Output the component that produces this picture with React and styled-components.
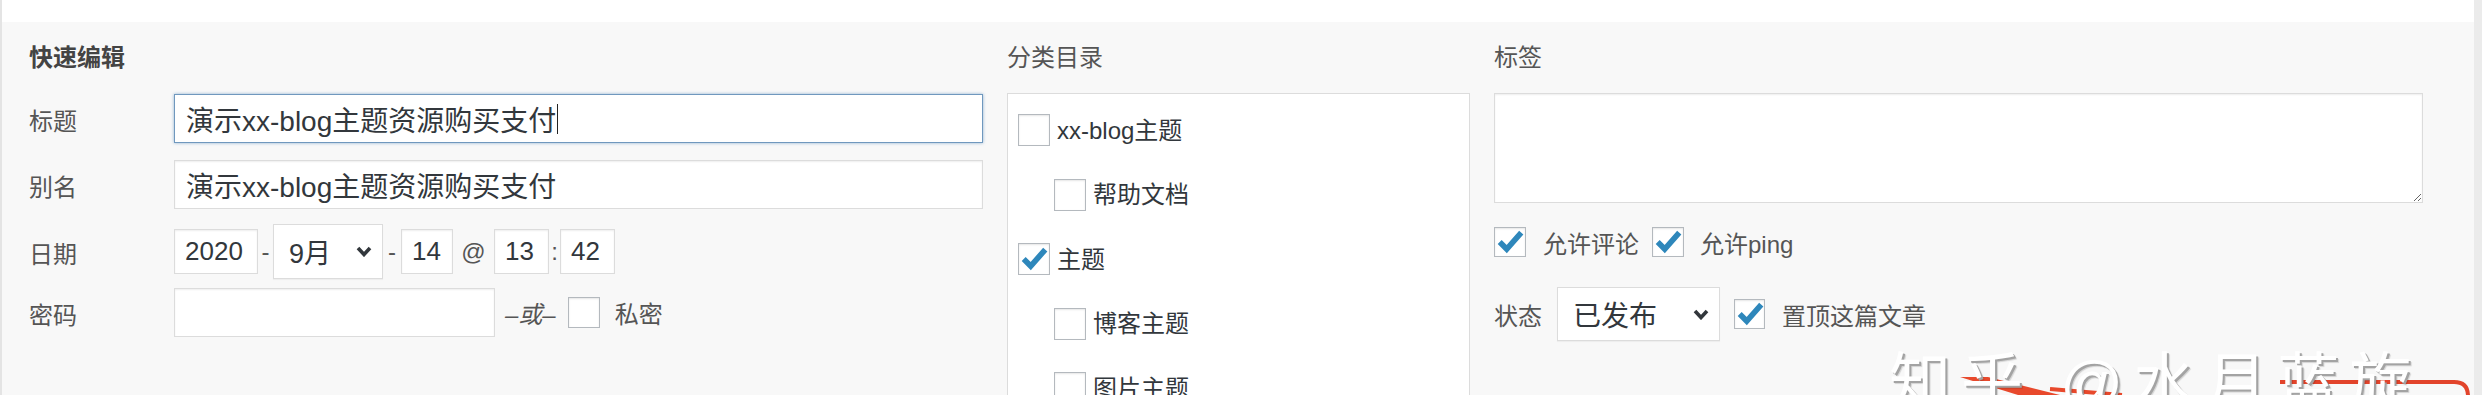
import React from "react";
import styled, { createGlobalStyle } from "styled-components";

const Global = createGlobalStyle`
  html, body { margin: 0; padding: 0; background: #fff; }
  body { font-family: "Liberation Sans", "Noto Sans CJK SC", sans-serif; }
  * { box-sizing: border-box; }
`;

const Page = styled.div`
  position: relative;
  display: flex;
  width: 2482px;
  height: 395px;
  overflow: hidden;
`;

const Main = styled.div`
  flex: 1;
  min-width: 0;
  display: flex;
  flex-direction: column;
  border-left: 2px solid #e4e4e4;
`;

const Scrollbar = styled.div`
  width: 8px;
  flex: none;
  background: #ebebeb;
`;

const TopStrip = styled.div`
  height: 22px;
  flex: none;
  background: #fff;
`;

const Panel = styled.div`
  flex: 1;
  background: #f8f8f8;
  display: grid;
  grid-template-columns: 954px 463px 929px;
  column-gap: 24px;
  align-items: start;
  padding: 19px 0 0 27px;
  overflow: hidden;
`;

const Column = styled.div`
  display: flex;
  flex-direction: column;
  min-width: 0;
`;

const Heading = styled.div`
  height: 34px;
  line-height: 34px;
  margin-bottom: 18px;
  font-size: 24px;
  color: ${(p) => (p.$strong ? "#444" : "#555")};
  font-weight: ${(p) => (p.$strong ? 700 : 400)};
`;

const FieldRow = styled.div`
  display: flex;
  align-items: center;
  height: ${(p) => p.$h}px;
  margin-top: ${(p) => p.$mt}px;
`;

const FieldLabel = styled.span`
  width: 145px;
  flex: none;
  padding-top: 2px;
  font-size: 24px;
  color: #555;
`;

const TextField = styled.div`
  flex: ${(p) => (p.$w ? "none" : "1")};
  width: ${(p) => (p.$w ? `${p.$w}px` : "auto")};
  height: ${(p) => p.$h || 49}px;
  display: flex;
  align-items: center;
  padding: 0 ${(p) => p.$pad || 11}px;
  background: #fff;
  border: 1px solid ${(p) => (p.$focus ? "#7098be" : "#dcdcdc")};
  box-shadow: ${(p) =>
    p.$focus
      ? "0 0 3px rgba(60, 120, 180, 0.55)"
      : "inset 0 1px 2px rgba(0, 0, 0, 0.07)"};
  font-size: ${(p) => p.$fs || 28}px;
  color: #32373c;
  white-space: nowrap;
  overflow: hidden;
`;

const Caret = styled.span`
  display: inline-block;
  width: 1px;
  height: 30px;
  margin-left: 1px;
  background: #222;
`;

const SelectBox = styled.div`
  flex: none;
  width: ${(p) => p.$w}px;
  height: ${(p) => p.$h}px;
  margin-left: ${(p) => p.$ml || 0}px;
  display: flex;
  align-items: center;
  justify-content: space-between;
  padding: 0 10px 0 15px;
  background: #fff;
  border: 1px solid #dcdcdc;
  box-shadow: 0 1px 1px rgba(0, 0, 0, 0.04);
  font-size: ${(p) => p.$fs}px;
  color: #32373c;
  white-space: nowrap;
`;

const Sep = styled.span`
  flex: none;
  width: ${(p) => p.$w}px;
  text-align: center;
  font-size: 24px;
  color: #555;
`;

const OrText = styled.span`
  margin-left: 10px;
  font-size: 24px;
  font-style: italic;
  color: #555;
`;

const Box = styled.span`
  flex: none;
  width: ${(p) => p.$w || 32}px;
  height: ${(p) => p.$h || 32}px;
  margin-left: ${(p) => p.$ml || 0}px;
  display: inline-flex;
  align-items: center;
  justify-content: center;
  background: #fff;
  border: 1px solid #b4b9be;
  box-shadow: inset 0 1px 2px rgba(0, 0, 0, 0.1);
  overflow: visible;
`;

const InlineText = styled.span`
  margin-left: ${(p) => p.$ml || 0}px;
  font-size: 24px;
  color: #555;
  white-space: nowrap;
`;

const CatBox = styled.div`
  height: 330px;
  background: #fff;
  border: 1px solid #dcdcdc;
  padding: 4px 10px 0 10px;
`;

const CatItem = styled.div`
  display: flex;
  align-items: center;
  gap: 7px;
  height: 64.5px;
  padding-left: ${(p) => p.$level * 36}px;
  font-size: 24px;
  color: #32373c;
  white-space: nowrap;
`;

const CatName = styled.span`
  margin-bottom: 4px;
`;

const TagArea = styled.textarea`
  display: block;
  width: 100%;
  height: 110px;
  margin: 0;
  background: #fff;
  border: 1px solid #dcdcdc;
  box-shadow: inset 0 1px 2px rgba(0, 0, 0, 0.07);
  resize: vertical;
  font-family: inherit;
  outline: none;
`;

const OptionRow = styled.div`
  display: flex;
  align-items: center;
  height: ${(p) => p.$h}px;
  margin-top: ${(p) => p.$mt}px;
`;

const Watermark = styled.div`
  position: absolute;
  left: 1889px;
  top: 352px;
  font-size: 62px;
  line-height: 1;
  letter-spacing: 10px;
  color: #fff;
  text-shadow: 2px 2px 0 #a3a3a3, 3px 3px 1px rgba(0, 0, 0, 0.15);
  white-space: nowrap;
  pointer-events: none;
`;

const Scribble = styled.svg`
  position: absolute;
  left: 1900px;
  top: 360px;
  width: 582px;
  height: 35px;
  pointer-events: none;
`;

const Check = () => (
  <svg width="30" height="30" viewBox="0 0 32 32" style={{ overflow: "visible" }}>
    <path d="M5 16 L12.5 23.5 L28 6" fill="none" stroke="#2e87bb" strokeWidth="6" />
  </svg>
);

const Chevron = () => (
  <svg width="16" height="11" viewBox="0 0 16 11">
    <polyline points="2,2 8,8.5 14,2" fill="none" stroke="#32373c" strokeWidth="3.6" />
  </svg>
);

const CheckBox = ({ checked, ...rest }) => <Box {...rest}>{checked && <Check />}</Box>;

const categories = [
  { name: "xx-blog主题", level: 0, checked: false },
  { name: "帮助文档", level: 1, checked: false },
  { name: "主题", level: 0, checked: true },
  { name: "博客主题", level: 1, checked: false },
  { name: "图片主题", level: 1, checked: false },
];

export default function App() {
  return (
    <>
      <Global />
      <Page>
        <Main>
          <TopStrip />
          <Panel>
            <Column>
              <Heading $strong>快速编辑</Heading>
              <FieldRow $h={49} $mt={1}>
                <FieldLabel>标题</FieldLabel>
                <TextField $focus>
                  演示xx-blog主题资源购买支付
                  <Caret />
                </TextField>
              </FieldRow>
              <FieldRow $h={49} $mt={17}>
                <FieldLabel>别名</FieldLabel>
                <TextField>演示xx-blog主题资源购买支付</TextField>
              </FieldRow>
              <FieldRow $h={55} $mt={15}>
                <FieldLabel>日期</FieldLabel>
                <TextField $w={84} $h={45} $pad={10} $fs={26}>2020</TextField>
                <Sep $w={15}>-</Sep>
                <SelectBox $w={110} $h={55} $fs={27}>
                  9月
                  <Chevron />
                </SelectBox>
                <Sep $w={18}>-</Sep>
                <TextField $w={52} $h={45} $pad={10} $fs={26}>14</TextField>
                <Sep $w={41}>@</Sep>
                <TextField $w={55} $h={45} $pad={10} $fs={26}>13</TextField>
                <Sep $w={11}>:</Sep>
                <TextField $w={55} $h={45} $pad={10} $fs={26}>42</TextField>
              </FieldRow>
              <FieldRow $h={49} $mt={9}>
                <FieldLabel>密码</FieldLabel>
                <TextField $w={321} />
                <OrText>–或–</OrText>
                <CheckBox $ml={12} $w={32} $h={31} />
                <InlineText $ml={15}>私密</InlineText>
              </FieldRow>
            </Column>

            <Column>
              <Heading>分类目录</Heading>
              <CatBox>
                {categories.map((c) => (
                  <CatItem key={c.name} $level={c.level}>
                    <CheckBox checked={c.checked} />
                    <CatName>{c.name}</CatName>
                  </CatItem>
                ))}
              </CatBox>
            </Column>

            <Column>
              <Heading>标签</Heading>
              <TagArea />
              <OptionRow $h={30} $mt={24}>
                <CheckBox checked $w={32} $h={30} />
                <InlineText $ml={17}>允许评论</InlineText>
                <CheckBox checked $w={32} $h={30} $ml={13} />
                <InlineText $ml={16}>允许ping</InlineText>
              </OptionRow>
              <OptionRow $h={54} $mt={30}>
                <InlineText>状态</InlineText>
                <SelectBox $w={163} $h={54} $fs={28} $ml={15}>
                  已发布
                  <Chevron />
                </SelectBox>
                <CheckBox checked $w={31} $h={30} $ml={14} />
                <InlineText $ml={17}>置顶这篇文章</InlineText>
              </OptionRow>
            </Column>
          </Panel>
        </Main>
        <Scrollbar />
        <Scribble viewBox="0 0 582 35">
          <polygon points="60,17 88,17 160,35 118,35" fill="#e8492c" />
          <line x1="150" y1="29" x2="222" y2="35" stroke="#e8492c" strokeWidth="4" />
          <path d="M380 22 L554 22 Q568 22 568 36" fill="none" stroke="#e2442b" strokeWidth="4" />
        </Scribble>
        <Watermark>知乎 @水月蓝旋</Watermark>
      </Page>
    </>
  );
}
